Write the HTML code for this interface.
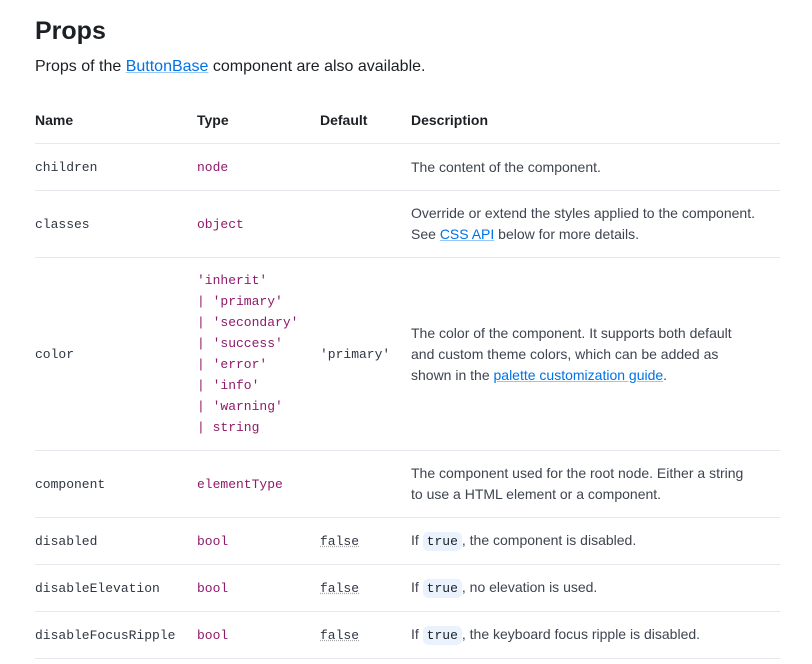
<!DOCTYPE html>
<html><head><style>
body{margin:0;width:812px;height:664px;background:#fff;font-family:"Liberation Sans",sans-serif;color:#1c2025;overflow:hidden}
h1{position:absolute;left:35px;top:17px;margin:0;font-size:25px;font-weight:700;color:#1c2025}
.sub{position:absolute;left:35px;top:58px;font-size:16px;color:#1c2025}
a{color:#0072e5;text-decoration:underline;text-decoration-color:rgba(0,114,229,.4)}
table{position:absolute;left:35px;top:96px;width:745px;border-collapse:collapse;font-size:14px}
td,th{padding:0;vertical-align:middle;border-bottom:1px solid #e5e8ec;text-align:left}
th{font-weight:700;font-size:14px;height:47px;color:#1c2025}
td{color:#3e4450;line-height:21px}
.m{font-family:"Liberation Mono",monospace;font-size:13px;color:#2f3642}
.t{font-family:"Liberation Mono",monospace;font-size:13px;color:#8f1a6b}
.d{font-family:"Liberation Mono",monospace;font-size:13px;color:#2f3642}
.df{text-decoration:underline dotted #aaa}
code{font-family:"Liberation Mono",monospace;font-size:13px;background:#eaf3fd;border-radius:5px;padding:2px 4px;color:#1c2025}
</style></head><body>
<h1>Props</h1>
<div class="sub">Props of the <a>ButtonBase</a> component are also available.</div>
<table>
<colgroup><col style="width:162px"><col style="width:123px"><col style="width:91px"><col></colgroup>
<tr><th>Name</th><th>Type</th><th>Default</th><th>Description</th></tr>
<tr style="height:47px"><td class="m">children</td><td class="t">node</td><td></td><td>The content of the component.</td></tr>
<tr style="height:67px"><td class="m">classes</td><td class="t">object</td><td></td><td>Override or extend the styles applied to the component.<br>See <a>CSS API</a> below for more details.</td></tr>
<tr style="height:193px"><td class="m">color</td><td class="t">'inherit'<br>| 'primary'<br>| 'secondary'<br>| 'success'<br>| 'error'<br>| 'info'<br>| 'warning'<br>| string</td><td class="d">'primary'</td><td>The color of the component. It supports both default<br>and custom theme colors, which can be added as<br>shown in the <a>palette customization guide</a>.</td></tr>
<tr style="height:67px"><td class="m">component</td><td class="t">elementType</td><td></td><td>The component used for the root node. Either a string<br>to use a HTML element or a component.</td></tr>
<tr style="height:47px"><td class="m">disabled</td><td class="t">bool</td><td class="d"><span class="df">false</span></td><td>If <code>true</code>, the component is disabled.</td></tr>
<tr style="height:47px"><td class="m">disableElevation</td><td class="t">bool</td><td class="d"><span class="df">false</span></td><td>If <code>true</code>, no elevation is used.</td></tr>
<tr style="height:47px"><td class="m">disableFocusRipple</td><td class="t">bool</td><td class="d"><span class="df">false</span></td><td>If <code>true</code>, the keyboard focus ripple is disabled.</td></tr>
</table>
</body></html>
